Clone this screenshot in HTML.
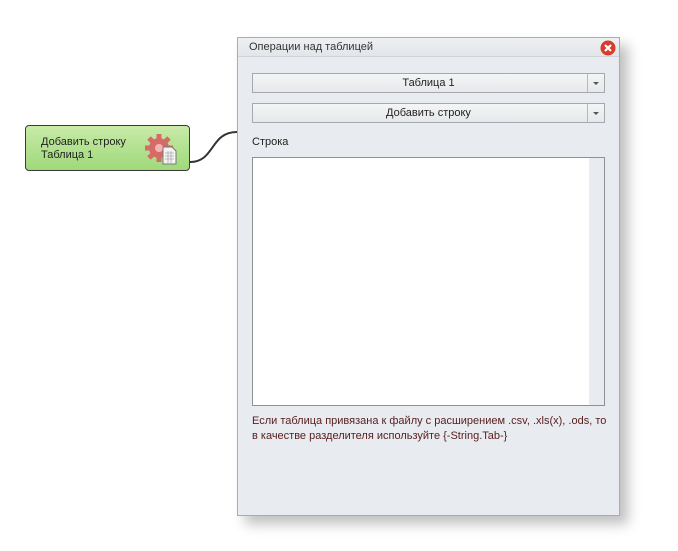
<!DOCTYPE html>
<html><head><meta charset="utf-8"><style>
body{margin:0;width:678px;height:551px;background:#fff;position:relative;overflow:hidden;font-family:"Liberation Sans","DejaVu Sans",sans-serif;font-size:11px;color:#222}
.node{position:absolute;left:25px;top:125px;width:163px;height:44px;border:1px solid #3a3a3a;border-radius:4px;background:linear-gradient(#c8eaa8,#9fd97a)}
.node .t{position:absolute;left:15px;top:10px;line-height:13px;font-size:11px;color:#222}
.panel{position:absolute;left:237px;top:37px;width:383px;height:479px;background:#e8ebf0;border:1px solid #a9acb0;box-sizing:border-box;box-shadow:8px 8px 12px rgba(0,0,0,.25)}
.title{height:18px;background:linear-gradient(#eef0f3,#e2e5e9);border-bottom:1px solid #d0d3d7;line-height:19px;padding-left:11px;color:#333}
.dd{position:absolute;left:14px;width:353px;height:20px;border:1px solid #a5a8ad;box-sizing:border-box;background:linear-gradient(#f4f5f7,#e6e8eb);text-align:center;line-height:18px;color:#222}
.dd .a{position:absolute;right:0;top:0;width:16px;height:18px;border-left:1px solid #b5b8bc}
.dd .a:after{content:"";position:absolute;left:5px;top:8px;border-left:3px solid transparent;border-right:3px solid transparent;border-top:3px solid #555}
.ta{position:absolute;left:14px;top:119px;width:353px;height:249px;border:1px solid #8e9196;box-sizing:border-box;background:#fff}
.ta .sb{position:absolute;right:0;top:0;width:15px;height:100%;background:#e8ebf0}
.note{position:absolute;left:14px;top:376px;line-height:14.5px;color:#5a2020;font-size:11px;white-space:nowrap}
</style></head><body>
<svg width="678" height="551" style="position:absolute;left:0;top:0">
<path d="M190 162 C215 162,210 132,237 132" fill="none" stroke="#333" stroke-width="2"/>
</svg>
<div class="node"><div class="t">Добавить строку<br>Таблица 1</div>
<svg width="36" height="36" style="position:absolute;left:118px;top:5px" viewBox="0 0 36 36">
<g fill="#d66a66"><circle cx="15" cy="17" r="10"/>
<g stroke="#d66a66" stroke-width="5"><line x1="15" y1="3" x2="15" y2="31"/><line x1="1" y1="17" x2="29" y2="17"/><line x1="5" y1="7" x2="25" y2="27"/><line x1="25" y1="7" x2="5" y2="27"/></g></g>
<circle cx="15" cy="17" r="4" fill="#f5b5b5"/>
<path d="M19 16h9l4 4v13H19z" fill="#f4f4f4" stroke="#777"/>
<path d="M21 22h9M21 25h9M21 28h9M24 20v12M27 20v12" stroke="#aaa" stroke-width=".8"/>
</svg></div>
<div class="panel">
<div class="title">Операции над таблицей</div>
<svg width="16" height="16" style="position:absolute;right:3px;top:2px"><circle cx="8" cy="8" r="7.5" fill="#d83a2c"/><path d="M5 5l6 6M11 5l-6 6" stroke="#fff" stroke-width="2.2"/></svg>
<div class="dd" style="top:35px">Таблица 1<div class="a"></div></div>
<div class="dd" style="top:65px">Добавить строку<div class="a"></div></div>
<div style="position:absolute;left:14px;top:98px;color:#222">Строка</div>
<div class="ta"><div class="sb"></div></div>
<div class="note">Если таблица привязана к файлу с расширением .csv, .xls(x), .ods, то<br>в качестве разделителя используйте {-String.Tab-}</div>
</div>
</body></html>
